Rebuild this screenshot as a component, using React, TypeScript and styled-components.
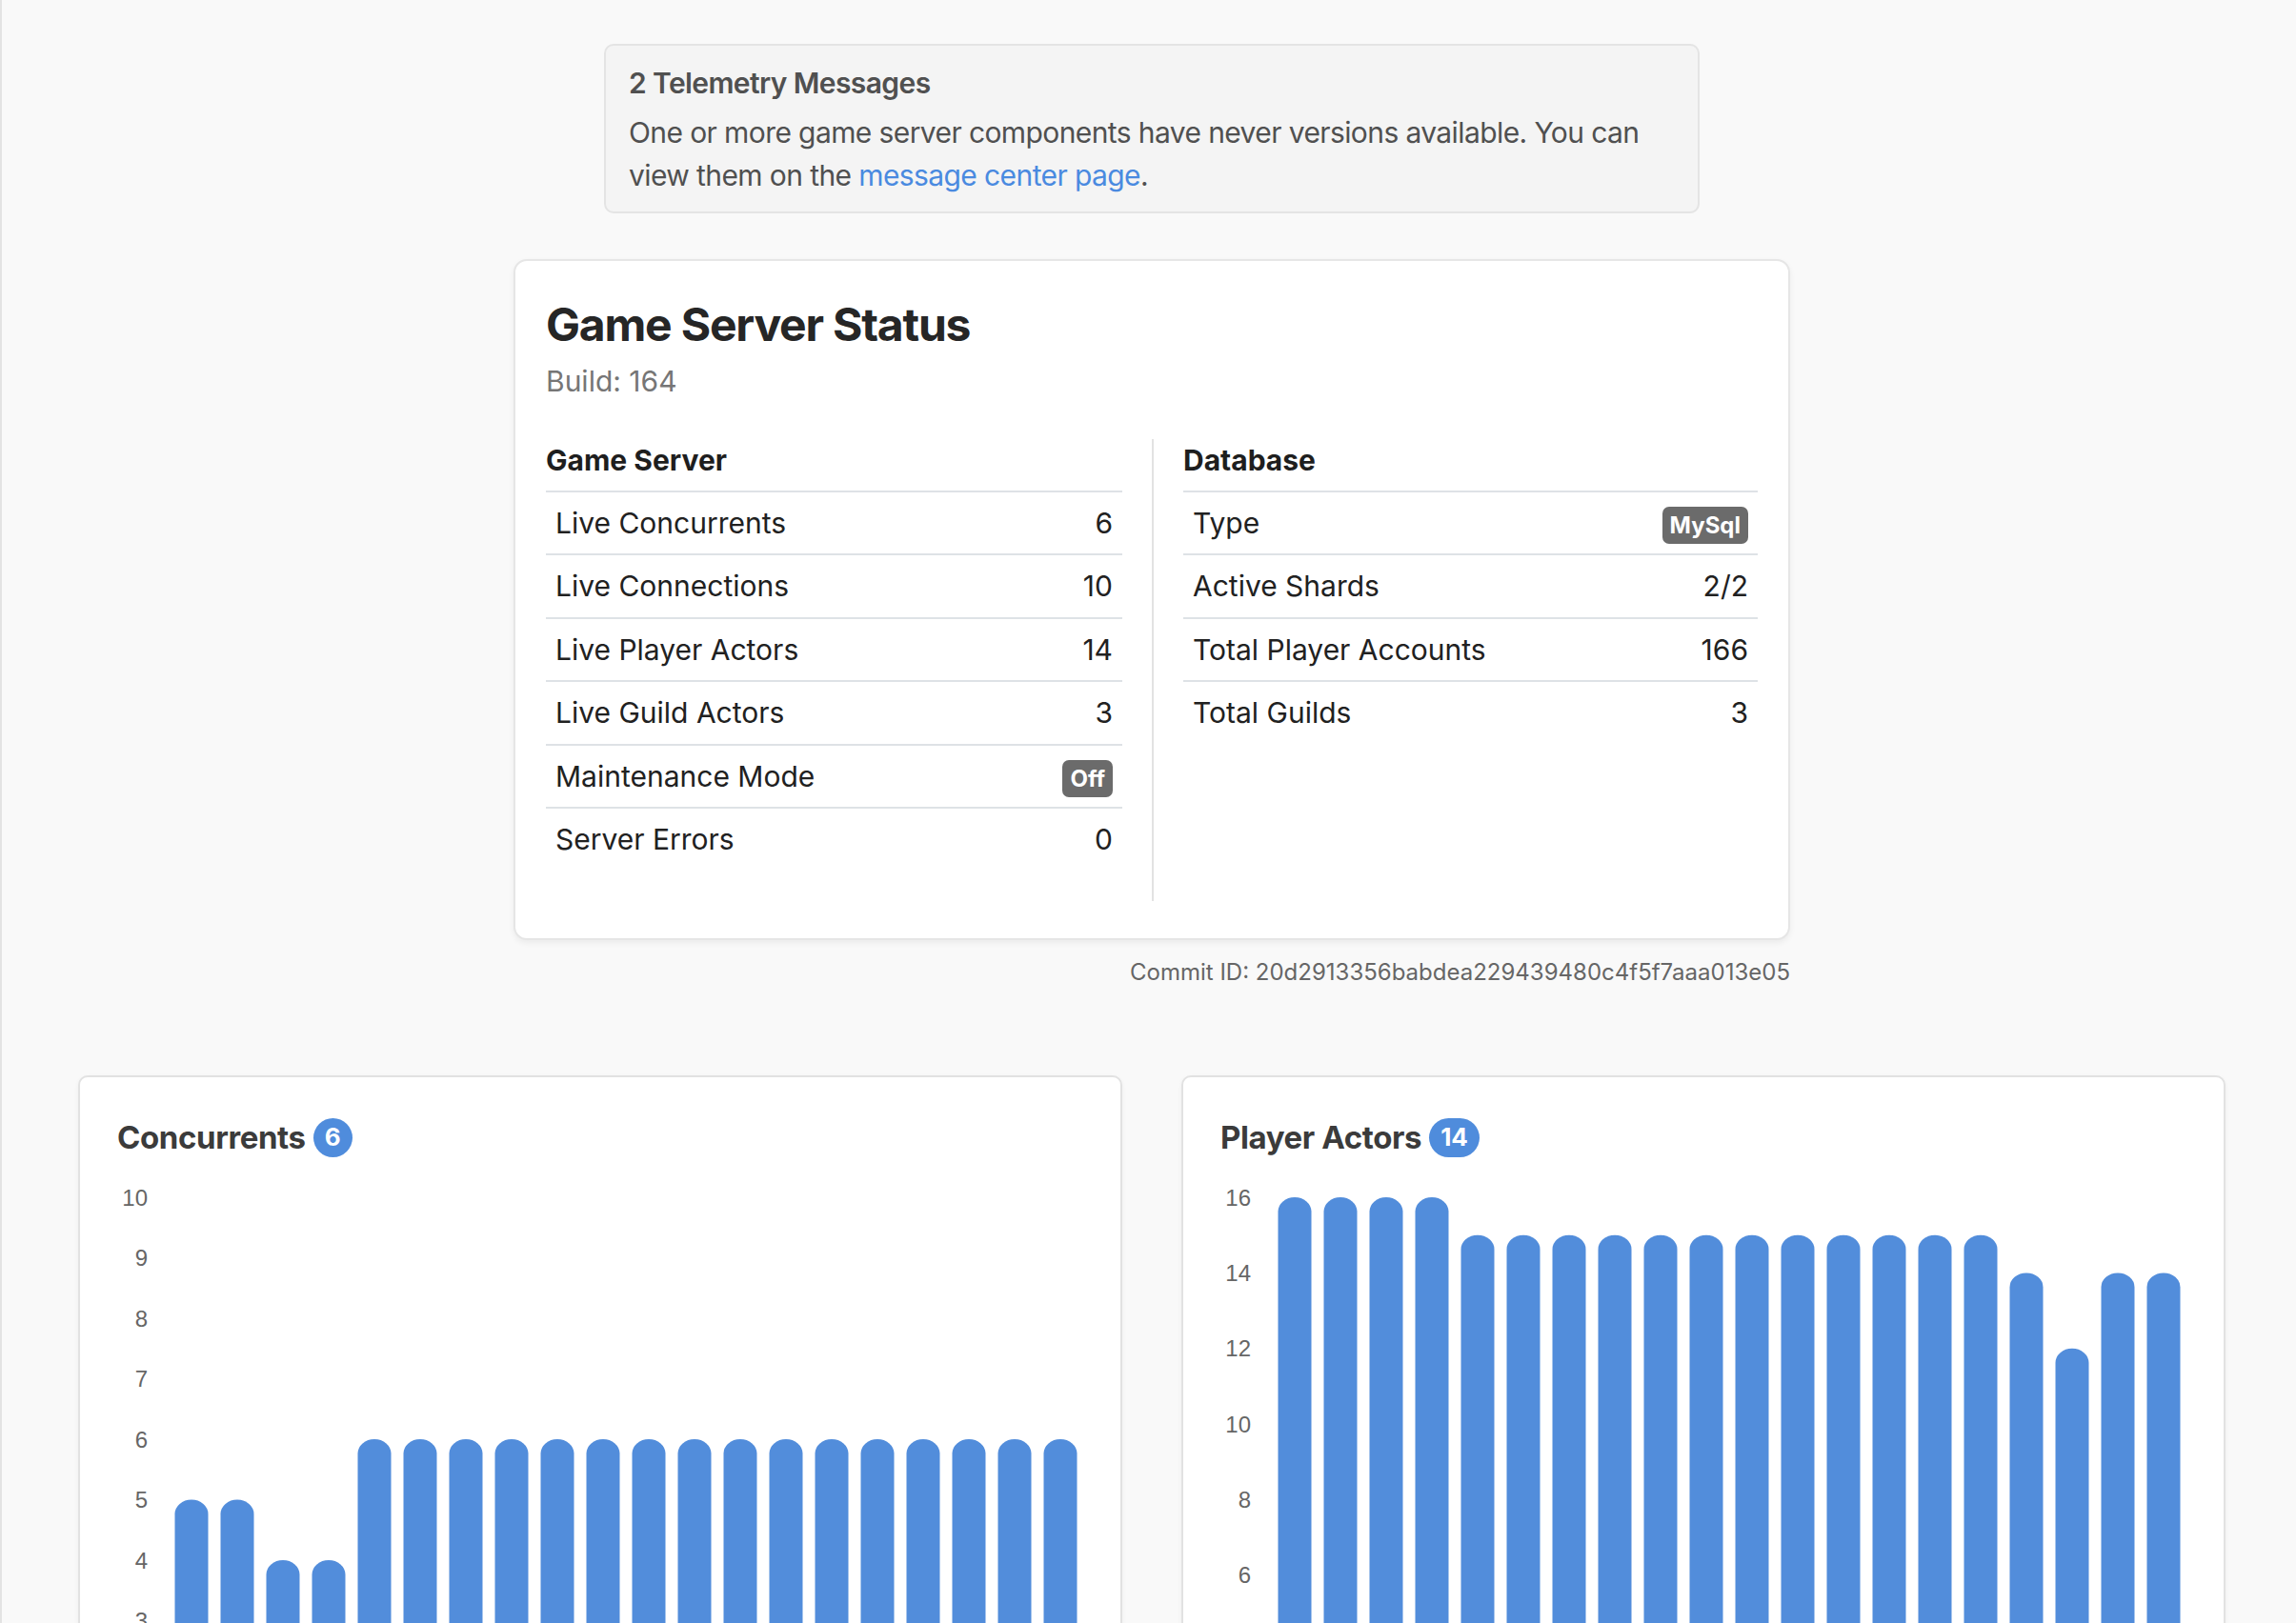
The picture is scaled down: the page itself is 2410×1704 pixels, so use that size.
import React from 'react';
import styled, { createGlobalStyle } from 'styled-components';

const GlobalStyle = createGlobalStyle`
  html, body {
    margin: 0;
    padding: 0;
    background: #f9f9f9;
  }
  body {
    font-family: Inter, "Noto Sans", "Liberation Sans", sans-serif;
    color: #222;
  }
  * {
    box-sizing: border-box;
  }
`;

const Page = styled.main`
  min-height: 100vh;
  border-left: 2px solid #e3e3e3;
  padding: 46px 74px 80px 80px;
`;

const Notice = styled.div`
  width: 1150px;
  margin: 0 auto;
  padding: 17px 22px 15px 24px;
  background: #f4f4f4;
  border: 2px solid #e4e4e4;
  border-radius: 10px;
  color: #505050;
  font-size: 30px;
  line-height: 45px;
  letter-spacing: -0.6px;
`;

const NoticeTitle = styled.div`
  font-weight: 600;
  margin-bottom: 7px;
`;

const NoticeLink = styled.a`
  color: #4a8ae0;
  text-decoration: none;
`;

const StatusCard = styled.section`
  width: 1340px;
  margin: 48px auto 0;
  padding: 38px 32px 39px;
  background: #fff;
  border: 2px solid #e6e6e6;
  border-radius: 14px;
  box-shadow: 0 3px 6px rgba(0, 0, 0, 0.06);
`;

const StatusTitle = styled.h1`
  margin: 0;
  font-size: 48px;
  line-height: 57px;
  font-weight: 700;
  letter-spacing: -1.2px;
  color: #262626;
`;

const BuildLine = styled.div`
  margin-top: 9px;
  font-size: 30px;
  line-height: 45px;
  color: #767676;
`;

const Columns = styled.div`
  display: grid;
  grid-template-columns: 1fr 1fr;
  margin-top: 38px;
`;

const Column = styled.div<{ $divider?: boolean }>`
  padding: ${({ $divider }) => ($divider ? '0 0 0 31px' : '0 31px 0 0')};
  border-left: ${({ $divider }) => ($divider ? '2px solid #e2e2e2' : 'none')};
`;

const ColumnTitle = styled.h2`
  margin: 0 0 9px;
  font-size: 30px;
  line-height: 45px;
  font-weight: 700;
  color: #1e1e1e;
`;

const StatTable = styled.table`
  width: 100%;
  border-collapse: collapse;
  margin-bottom: 33px;
`;

const StatCell = styled.td<{ $value?: boolean }>`
  padding: 11px 10px 10px;
  border-top: 2px solid #dee2e6;
  font-size: 30px;
  line-height: 43.4px;
  color: #212121;
  text-align: ${({ $value }) => ($value ? 'right' : 'left')};
  vertical-align: middle;
`;

const GrayBadge = styled.span`
  display: inline-block;
  padding: 8px 8px 7px;
  border-radius: 7px;
  background: #6b6b6b;
  color: #fff;
  font-size: 24px;
  line-height: 24px;
  font-weight: 700;
  vertical-align: middle;
`;

const Commit = styled.div`
  width: 1340px;
  margin: 15px auto 0;
  text-align: right;
  font-size: 24px;
  line-height: 38px;
  color: #666;
`;

const ChartGrid = styled.div`
  display: grid;
  grid-template-columns: 1fr 1fr;
  gap: 62px;
  margin-top: 89px;
`;

const ChartCard = styled.section`
  padding: 42px 39px 30px;
  background: #fff;
  border: 2px solid #e2e2e2;
  border-radius: 10px;
  box-shadow: 0 2px 5px rgba(0, 0, 0, 0.05);
`;

const ChartTitle = styled.h3`
  display: flex;
  align-items: center;
  gap: 8px;
  margin: 0;
  font-size: 33px;
  line-height: 42px;
  font-weight: 700;
  letter-spacing: -0.4px;
  color: #3b3b3b;
`;

const CountBadge = styled.span`
  display: inline-flex;
  align-items: center;
  justify-content: center;
  min-width: 41px;
  height: 41px;
  padding: 0 12px;
  border-radius: 21px;
  background: #4f8cdc;
  color: #fff;
  font-size: 26px;
  font-weight: 700;
  letter-spacing: 0;
`;

const TickLabel = styled.text`
  font-family: "Liberation Sans", Arial, sans-serif;
  font-size: 24px;
  fill: #666;
`;

const Bar = styled.path`
  fill: #528ddb;
`;

interface BarChartProps {
  values: number[];
  max: number;
  step: number;
}

const BarChart: React.FC<BarChartProps> = ({ values, max, step }) => {
  const width = 1014;
  const top = 42;
  const plotH = 635;
  const left = 54;
  const plotW = 960;
  const slot = plotW / values.length;
  const bw = 35;
  const r = bw / 2;
  const bottom = top + plotH;
  const y = (v: number) => top + plotH * (1 - v / max);

  const ticks: number[] = [];
  for (let v = max; v >= 0; v -= step) ticks.push(v);

  return (
    <svg width={width} height={bottom + 40} style={{ display: 'block' }}>
      {ticks.map((t) => (
        <TickLabel key={t} x={32} y={y(t)} textAnchor="end" dominantBaseline="central">
          {t}
        </TickLabel>
      ))}
      {values.map((v, i) => {
        const x = left + slot * i + (slot - bw) / 2;
        const yt = y(v);
        const d = `M${x},${bottom} L${x},${yt + 15} A${r},15 0 0 1 ${x + bw},${yt + 15} L${x + bw},${bottom} Z`;
        return <Bar key={i} d={d} />;
      })}
    </svg>
  );
};

const gameServer: [string, React.ReactNode][] = [
  ['Live Concurrents', 6],
  ['Live Connections', 10],
  ['Live Player Actors', 14],
  ['Live Guild Actors', 3],
  ['Maintenance Mode', <GrayBadge>Off</GrayBadge>],
  ['Server Errors', 0],
];

const database: [string, React.ReactNode][] = [
  ['Type', <GrayBadge>MySql</GrayBadge>],
  ['Active Shards', '2/2'],
  ['Total Player Accounts', 166],
  ['Total Guilds', 3],
];

const concurrents = [5, 5, 4, 4, 6, 6, 6, 6, 6, 6, 6, 6, 6, 6, 6, 6, 6, 6, 6, 6];
const playerActors = [16, 16, 16, 16, 15, 15, 15, 15, 15, 15, 15, 15, 15, 15, 15, 15, 14, 12, 14, 14];

const StatRows: React.FC<{ rows: [string, React.ReactNode][] }> = ({ rows }) => (
  <StatTable>
    <tbody>
      {rows.map(([label, value]) => (
        <tr key={label}>
          <StatCell>{label}</StatCell>
          <StatCell $value>{value}</StatCell>
        </tr>
      ))}
    </tbody>
  </StatTable>
);

export default function App() {
  return (
    <>
      <GlobalStyle />
      <Page>
        <Notice>
          <NoticeTitle>2 Telemetry Messages</NoticeTitle>
          One or more game server components have never versions available. You can view them on the{' '}
          <NoticeLink href="#">message center page</NoticeLink>.
        </Notice>

        <StatusCard>
          <StatusTitle>Game Server Status</StatusTitle>
          <BuildLine>Build: 164</BuildLine>
          <Columns>
            <Column>
              <ColumnTitle>Game Server</ColumnTitle>
              <StatRows rows={gameServer} />
            </Column>
            <Column $divider>
              <ColumnTitle>Database</ColumnTitle>
              <StatRows rows={database} />
            </Column>
          </Columns>
        </StatusCard>
        <Commit>Commit ID: 20d2913356babdea229439480c4f5f7aaa013e05</Commit>

        <ChartGrid>
          <ChartCard>
            <ChartTitle>
              Concurrents <CountBadge>6</CountBadge>
            </ChartTitle>
            <BarChart values={concurrents} max={10} step={1} />
          </ChartCard>
          <ChartCard>
            <ChartTitle>
              Player Actors <CountBadge>14</CountBadge>
            </ChartTitle>
            <BarChart values={playerActors} max={16} step={2} />
          </ChartCard>
        </ChartGrid>
      </Page>
    </>
  );
}
